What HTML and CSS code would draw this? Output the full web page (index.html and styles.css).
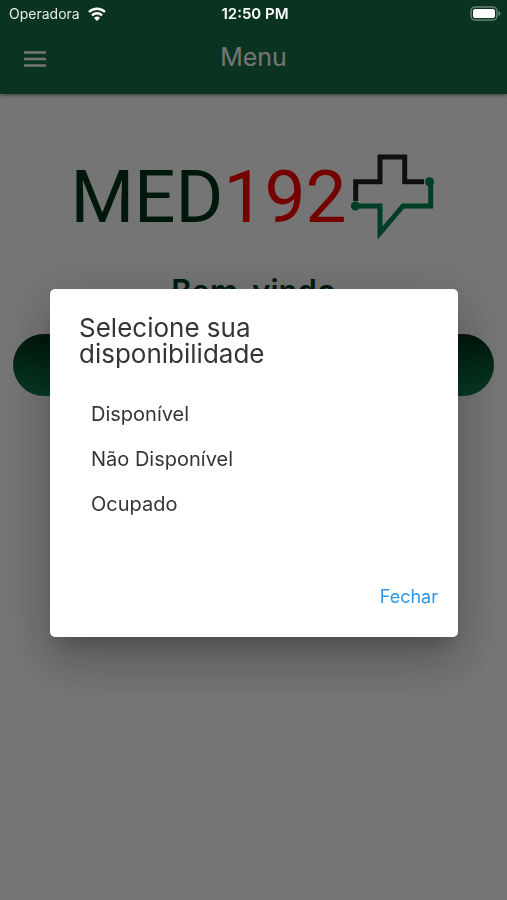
FILE: index.html
```html
<!DOCTYPE html>
<html lang="pt">
<head>
<meta charset="utf-8">
<meta name="viewport" content="width=device-width, initial-scale=1">
<title>Menu</title>
<link rel="stylesheet" href="styles.css">
</head>
<body>
<div class="status">
  <div class="carrier">
    <span>Operadora</span>
    <svg class="wifi" viewBox="0 0 18 14" aria-hidden="true">
      <path d="M1 5a11.500 11.500 0 0 1 16 0M4 8.300a7.300 7.300 0 0 1 10 0" fill="none" stroke="#fff" stroke-width="2.400"/>
      <path d="M6 11a4.300 4.300 0 0 1 6 0L9 14z" fill="#fff"/>
    </svg>
  </div>
  <span class="time">12:50 PM</span>
  <svg class="battery" viewBox="0 0 31 15" aria-hidden="true">
    <rect x="1" y="1" width="26" height="13" rx="4" fill="none" stroke="#698478" stroke-width="1.500"/>
    <rect x="3" y="3" width="22" height="9" rx="2" fill="#fff"/>
    <path d="M28.500 5q2 .5 2 2.500t-2 2.500z" fill="#698478"/>
  </svg>
</div>
<header class="bar">
  <button class="menu" type="button" aria-label="Menu">
    <svg viewBox="0 0 22 16" aria-hidden="true"><path d="M0 1.500h22M0 8h22M0 14.500h22" stroke="#fff" stroke-width="2.400"/></svg>
  </button>
  <h1>Menu</h1>
</header>
<main class="page">
  <div class="logo">
    <span class="word">MED<span class="num">192</span></span>
    <svg class="cross" viewBox="351 152 86 90" aria-hidden="true">
      <g fill="none" stroke-width="5" stroke-miterlimit="10">
        <path d="M355.700 201v-19.300H380V157h24.700v24.700H424" stroke="#222"/>
        <path d="M355 206h25v27l23-27h27.700v-24" stroke="#008756"/>
      </g>
      <circle cx="355.300" cy="206" r="4.500" fill="#008756"/>
      <circle cx="429.500" cy="181.700" r="4.500" fill="#008756"/>
    </svg>
  </div>
  <h2>Bem-vindo</h2>
  <button class="pill" type="button" aria-label="Disponibilidade"></button>
</main>
<div class="scrim">
  <section class="dialog" role="dialog" aria-modal="true" aria-labelledby="title">
    <h2 class="title" id="title">Selecione sua disponibilidade</h2>
    <div class="options">
      <button type="button">Disponível</button>
      <button type="button">Não Disponível</button>
      <button type="button">Ocupado</button>
    </div>
    <button class="close" type="button">Fechar</button>
  </section>
</div>
</body>
</html>
```
FILE: styles.css
```css
* { box-sizing: border-box; }
body {
  margin: 0;
  min-height: 100vh;
  background: #fff;
  font-family: Inter, "Liberation Sans", sans-serif;
}
button {
  border: 0;
  padding: 0;
  background: none;
  font: inherit;
  color: inherit;
  cursor: pointer;
}
svg { display: block; }
h1, h2 { margin: 0; font-weight: 400; }

.status {
  position: fixed;
  inset: 0 0 auto;
  z-index: 3;
  display: grid;
  grid-template-columns: 1fr auto 1fr;
  align-items: center;
  height: 27px;
  padding: 0 6px 0 9px;
  color: #fff;
  font-size: 14px;
}
.carrier { display: flex; align-items: center; gap: 8px; color: #e4ebe8; }
.wifi { width: 18px; height: 14px; }
.time { font-size: 15px; font-weight: 600; }
.battery { width: 31px; height: 15px; justify-self: end; }

.bar {
  display: grid;
  grid-template-columns: 1fr auto 1fr;
  align-items: center;
  padding: 28px 24px 8px;
  height: 94px;
  background: #1a6f49;
  color: #fff;
  box-shadow: 0 1px 4px rgba(0, 0, 0, .5);
}
.bar h1 { font-size: 25px; line-height: 32px; }
.menu { width: 22px; margin-top: 4px; }

.page { padding: 58px 13px 0; text-align: center; }
.logo { display: flex; justify-content: center; gap: 4px; }
.word {
  margin-top: 1px;
  font-family: Roboto, sans-serif;
  font-size: 73px;
  line-height: 88px;
  color: #00341c;
}
.num { color: #f00; }
.cross { width: 86px; height: 90px; }
.page h2 {
  margin-top: 30px;
  font-size: 31px;
  line-height: 38px;
  font-weight: 600;
  color: #003c24;
}
.pill {
  display: block;
  width: 100%;
  height: 62px;
  margin-top: 24px;
  border-radius: 31px;
  background: linear-gradient(#003018, #0e8050);
}

.scrim {
  position: fixed;
  inset: 0;
  z-index: 2;
  display: flex;
  align-items: center;
  padding: 26px 49px 0 50px;
  background: rgba(0, 0, 0, .54);
}
.dialog {
  display: flex;
  flex-direction: column;
  width: 100%;
  padding: 26px 20px 27px 29px;
  border-radius: 5px;
  background: #fff;
  color: #353535;
  box-shadow: 0 14px 18px -8px rgba(0, 0, 0, .2), 0 28px 46px 4px rgba(0, 0, 0, .14), 0 10px 56px 10px rgba(0, 0, 0, .12);
}
.title {
  max-width: 240px;
  font-size: 26px;
  line-height: 26px;
}
.options {
  display: flex;
  flex-direction: column;
  align-items: flex-start;
  padding: 24px 0 58px 12px;
  font-size: 20px;
}
.options button { height: 45px; }
.close {
  align-self: flex-end;
  font-size: 18px;
  line-height: 26px;
  color: #2f96e8;
}
```
